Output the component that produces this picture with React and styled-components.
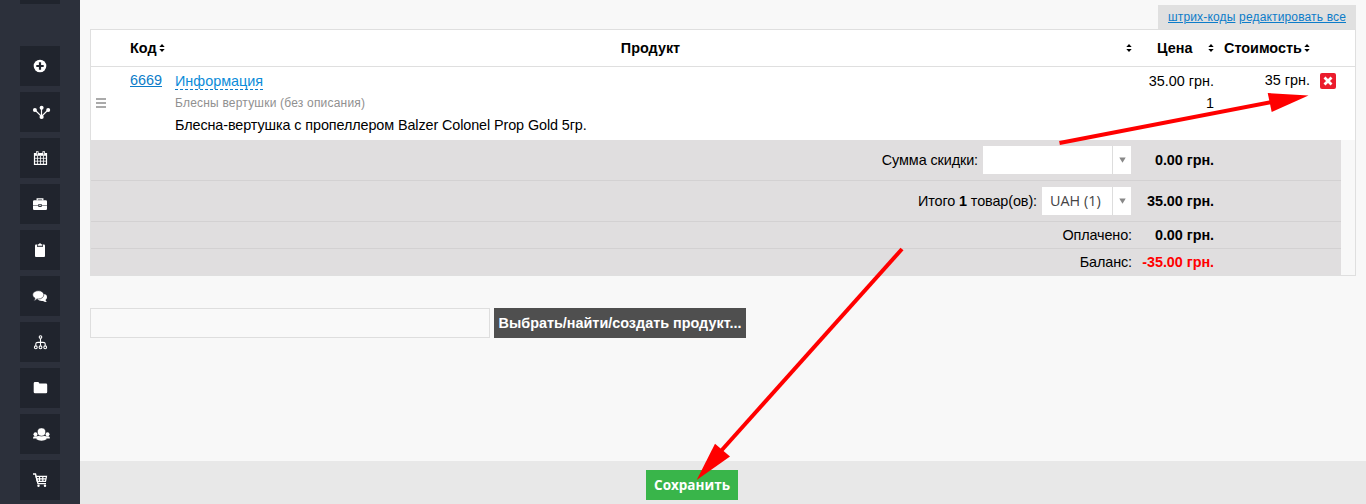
import React from "react";
import styled, { createGlobalStyle } from "styled-components";

const Global = createGlobalStyle`
  * { box-sizing: border-box; }
  body { margin: 0; background: #f8f8f8; }
`;

const Page = styled.div`
  position: relative;
  display: flex;
  width: 1366px;
  height: 504px;
  overflow: hidden;
  background: #f8f8f8;
  color: #000;
  font: 14.4px/18px "Liberation Sans", Arial, sans-serif;
  white-space: nowrap;
`;
const Sidebar = styled.nav`
  flex: none;
  width: 80px;
  height: 504px;
  padding-left: 20px;
  background: #2c303b;
  overflow: hidden;
`;
const NavStub = styled.div`
  width: 40px;
  height: 4px;
  margin-bottom: 42px;
  background: #20242d;
`;
const NavButton = styled.a`
  display: block;
  width: 40px;
  height: 40px;
  margin-bottom: 6px;
  background: #20242d;
  svg { display: block; }
`;
const Main = styled.main`
  flex: 1;
  display: flex;
  flex-direction: column;
`;
const Content = styled.div`
  flex: 1;
  display: flex;
  flex-direction: column;
  padding: 5px 10px 0;
`;
const Tools = styled.div`
  align-self: flex-end;
  display: flex;
  justify-content: space-between;
  width: 198px;
  height: 24px;
  padding: 0 10px;
  background: #e0e0e0;
  font-size: 12px;
  letter-spacing: 0.15px;
  line-height: 24px;
`;
const Link = styled.a`
  color: #0c7cc9;
  text-decoration: underline;
`;
const Table = styled.section`
  height: 247px;
  border: 1px solid #dfdfdf;
`;
const columns = "39px 45px 957px 87px 95px 41px";
const HeadRow = styled.div`
  display: grid;
  grid-template-columns: ${columns};
  align-items: center;
  height: 37px;
  border-bottom: 1px solid #dfdfdf;
  background: #fff;
  font-weight: bold;
`;
const HeadCell = styled.div`
  display: flex;
  align-items: center;
  justify-content: ${(p) => p.$justify || "flex-start"};
  padding-right: ${(p) => p.$end || 0}px;
  padding-left: ${(p) => p.$start || 0}px;
  gap: ${(p) => p.$gap || 0}px;
`;
const Row = styled.div`
  display: grid;
  grid-template-columns: ${columns};
  height: 73px;
  background: #fff;
`;
const Handle = styled.div`
  display: flex;
  flex-direction: column;
  gap: 2px;
  padding: 31px 0 0 5px;
`;
const HandleBar = styled.i`
  width: 10px;
  height: 2px;
  background: #aaa;
`;
const Cell = styled.div`
  padding-top: ${(p) => p.$top}px;
  padding-right: ${(p) => p.$end || 0}px;
  text-align: ${(p) => p.$align || "left"};
`;
const Info = styled.a`
  display: inline-block;
  height: 17px;
  line-height: 16px;
  border-bottom: 1px dashed #0c7cc9;
  color: #0c8cd9;
`;
const Line = styled.div`
  height: 22px;
  line-height: 22px;
`;
const ProductName = styled(Line)`
  letter-spacing: -0.1px;
`;
const Category = styled(Line)`
  color: #909090;
  font-size: 12px;
  letter-spacing: 0.2px;
`;
const Remove = styled.button`
  display: block;
  width: 16px;
  height: 16px;
  margin: 6px 0 0 6px;
  padding: 0;
  border: 0;
  border-radius: 2px;
  background: #eb1c2d;
  svg { display: block; }
`;
const Summary = styled.div`
  width: 1250px;
  background: #e0dedf;
`;
const SumRow = styled.div`
  display: grid;
  grid-template-columns: 1041px 82px;
  align-items: center;
  height: ${(p) => p.$h}px;
  border-top: ${(p) => (p.$first ? "0" : "1px solid #d3d1d2")};
`;
const SumLabel = styled.div`
  display: flex;
  justify-content: flex-end;
  align-items: center;
  gap: 5px;
  letter-spacing: -0.1px;
`;
const Amount = styled.b`
  text-align: right;
  letter-spacing: -0.05px;
  color: ${(p) => (p.$debt ? "#f00" : "#000")};
`;
const Select = styled.div`
  display: flex;
  align-items: center;
  justify-content: space-between;
  width: ${(p) => p.$w}px;
  height: 28px;
  margin-right: 1px;
  padding-left: 8px;
  background: #fff;
  color: #444;
  font-family: "Open Sans", sans-serif;
  letter-spacing: 0;
`;
const Caret = styled.span`
  display: flex;
  align-items: center;
  justify-content: center;
  width: 19px;
  height: 28px;
  border-left: 1px solid #ddd;
`;
const Search = styled.div`
  display: flex;
  gap: 4px;
  margin-top: 32px;
`;
const SearchInput = styled.input`
  width: 400px;
  height: 30px;
  border: 1px solid #dedede;
  background: #f9f9f9;
`;
const SearchButton = styled.button`
  width: 252px;
  height: 30px;
  padding: 0;
  border: 0;
  background: #4f4f4f;
  color: #fff;
  font: bold 14.4px/30px "Liberation Sans", Arial, sans-serif;
`;
const Footer = styled.footer`
  display: flex;
  height: 43px;
  padding: 9px 0 0 566px;
  background: #e8e8e8;
`;
const Save = styled.button`
  width: 92px;
  height: 30px;
  padding: 0;
  border: 0;
  background: #39b54a;
  color: #fff;
  font: bold 13.5px/30px "Open Sans", sans-serif;
`;
const Overlay = styled.svg`
  position: absolute;
  inset: 0;
  pointer-events: none;
`;

const Sort = () => (
  <svg width="6" height="8" viewBox="0 0 6 8">
    <path d="M.3 3L3 0L5.7 3ZM.3 5H5.7L3 8Z" fill="#000" />
  </svg>
);
const DropCaret = () => (
  <Caret>
    <svg width="7" height="6" viewBox="0 0 7 6"><path d="M.3 .5H6.7L3.5 5.7Z" fill="#888" /></svg>
  </Caret>
);

const icons = [
  <g key="add"><circle cx="20" cy="20" r="6.3" fill="#fff" /><path d="M20 16.3V23.7M16.3 20H23.7" stroke="#20242d" strokeWidth="2.2" /></g>,
  <g key="nodes" fill="#fff"><path d="M15 18L21.5 24.5L28 18M21.5 16V24" fill="none" stroke="#fff" strokeWidth="1.2" /><circle cx="14.9" cy="18.1" r="2" /><circle cx="21.6" cy="15.8" r="2" /><circle cx="28.2" cy="18.1" r="2" /><circle cx="21.6" cy="25" r="2.1" /></g>,
  <g key="calendar" fill="none" stroke="#fff"><path d="M14.5 15.5H26.5V26.4H14.5Z" strokeWidth="1.2" /><path d="M14 16.5H27" strokeWidth="2.6" /><path d="M14.5 20.3H26.5M14.5 23.2H26.5M17.5 18V26M20.5 18V26M23.5 18V26" strokeWidth=".8" /><path d="M17.3 13.2V16.7M23.7 13.2V16.7" strokeWidth="2.5" /><path d="M17.3 14V16.5M23.7 14V16.5" stroke="#20242d" strokeWidth=".8" /></g>,
  <g key="briefcase" fill="#fff"><path d="M17.2 16.5V14.8H22.8V16.5" fill="none" stroke="#fff" strokeWidth="1.3" /><path d="M14.3 16.3H25.7Q27 16.3 27 17.6V21H21.6V20H18.4V21H13V17.6Q13 16.3 14.3 16.3ZM13 21.5H18.4V23H21.6V21.5H27V25Q27 26 25.8 26H14.2Q13 26 13 25Z" /><rect x="19.3" y="20.6" width="1.4" height="1.5" /></g>,
  <g key="clipboard"><path d="M16 14.5H24Q25 14.5 25 15.5V26Q25 27 24 27H16Q15 27 15 26V15.5Q15 14.5 16 14.5Z" fill="#fff" /><path d="M17 14V16.8H23V14" fill="#20242d" /><path d="M17.7 15.8V14.2H18.7Q20 12.3 21.3 14.2H22.3V15.8Z" fill="#fff" /></g>,
  <g key="chat"><path d="M20 18.5Q27 17 27 21.2Q27 23 25.5 24Q25.8 25.2 26.8 26Q24.5 26.2 23 24.9Q19.5 25.3 17.5 23.6Z" fill="#fff" /><path d="M18.3 14.7C21.7 14.7 23.8 16.5 23.8 18.8S21.7 23 18.3 23L17 22.9Q15.5 24.4 13.7 24.4Q14.8 23.6 15 22.2C13.6 21.5 12.7 20.3 12.7 18.8C12.7 16.5 15 14.7 18.3 14.7Z" fill="#fff" stroke="#20242d" strokeWidth=".6" /></g>,
  <g key="tree" fill="none" stroke="#fff" strokeWidth="1.1"><circle cx="20.5" cy="15" r="1.3" /><circle cx="15.8" cy="25.3" r="1.4" /><circle cx="20.5" cy="25.3" r="1.4" /><circle cx="25.2" cy="25.3" r="1.4" /><path d="M20.5 16.5V23.8M15.8 23.8V21.8Q15.8 20.4 18 20.4H23Q25.2 20.4 25.2 21.8V23.8" /></g>,
  <path key="folder" d="M15 14H18Q19.3 14 19.3 15.5H26Q27.2 15.5 27.2 16.7V24Q27.2 25.2 26 25.2H15Q13.7 25.2 13.7 24V15.4Q13.7 14 15 14Z" fill="#fff" />,
  <g key="group" fill="#fff"><circle cx="15.5" cy="20.2" r="2" /><circle cx="27.5" cy="20.2" r="2" /><path d="M13 24.5V23.6Q13.5 22.2 15 22.2H28Q29.5 22.2 29.8 23.6V24.5Z" /><circle cx="21.5" cy="18" r="4.1" stroke="#20242d" strokeWidth=".5" /><path d="M16.4 25.3Q16.4 22.5 18.7 22Q21.5 23.3 24.3 22Q26.6 22.5 26.6 25.3Q24.8 26.7 21.5 26.7T16.4 25.3Z" /></g>,
  <g key="cart" fill="none" stroke="#fff"><path d="M13 14H15.5L18 23.6H26" strokeWidth="1.4" /><path d="M16 16.3H26.5L25.5 21.3H17.3ZM16.5 18.8H26M19.5 16.3V21M22.8 16.3V21" strokeWidth="1.2" /><circle cx="18.5" cy="25.8" r="1.2" fill="#fff" stroke="none" /><circle cx="25" cy="25.8" r="1.2" fill="#fff" stroke="none" /></g>,
];

export default function App() {
  return (
    <Page>
      <Global />
      <Sidebar>
        <NavStub />
        {icons.map((icon) => (
          <NavButton key={icon.key}><svg width="40" height="40">{icon}</svg></NavButton>
        ))}
      </Sidebar>
      <Main>
        <Content>
          <Tools><Link>штрих-коды</Link><Link>редактировать все</Link></Tools>
          <Table>
            <HeadRow>
              <span />
              <HeadCell $gap={2}>Код<Sort /></HeadCell>
              <HeadCell $justify="space-between"><span /><span>Продукт</span><Sort /></HeadCell>
              <HeadCell $justify="space-between" $start={25} $end={5}>Цена<Sort /></HeadCell>
              <HeadCell $gap={2} $start={5}>Стоимость<Sort /></HeadCell>
            </HeadRow>
            <Row>
              <Handle><HandleBar /><HandleBar /><HandleBar /></Handle>
              <Cell $top={4}><Link>6669</Link></Cell>
              <Cell $top={3}>
                <Line><Info>Информация</Info></Line>
                <Category>Блесны вертушки (без описания)</Category>
                <ProductName>Блесна-вертушка с пропеллером Balzer Colonel Prop Gold 5гр.</ProductName>
              </Cell>
              <Cell $top={3} $end={5} $align="right"><Line>35.00 грн.</Line><Line>1</Line></Cell>
              <Cell $top={4} $end={4} $align="right">35 грн.</Cell>
              <Remove aria-label="Удалить"><svg width="16" height="16"><path d="M4.5 4.5L11.5 11.5M11.5 4.5L4.5 11.5" stroke="#fff" strokeWidth="2.8" /></svg></Remove>
            </Row>
            <Summary>
              <SumRow $h={40} $first><SumLabel><span>Сумма скидки:</span><Select $w={148}><span /><DropCaret /></Select></SumLabel><Amount>0.00 грн.</Amount></SumRow>
              <SumRow $h={41}><SumLabel><span>Итого <b>1</b> товар(ов):</span><Select $w={89}>UAH (1)<DropCaret /></Select></SumLabel><Amount>35.00 грн.</Amount></SumRow>
              <SumRow $h={27}><SumLabel>Оплачено:</SumLabel><Amount>0.00 грн.</Amount></SumRow>
              <SumRow $h={27}><SumLabel>Баланс:</SumLabel><Amount $debt>-35.00 грн.</Amount></SumRow>
            </Summary>
          </Table>
          <Search><SearchInput /><SearchButton>Выбрать/найти/создать продукт...</SearchButton></Search>
        </Content>
        <Footer><Save>Сохранить</Save></Footer>
      </Main>
      <Overlay width="1366" height="504">
        <g fill="#f00" stroke="#f00">
          <path d="M1059.5 143L1272 102" strokeWidth="4" />
          <path d="M1308.5 95.5L1267.7 93L1271.7 112Z" stroke="none" />
          <path d="M902 249L721 451" strokeWidth="4" />
          <path d="M696.7 480L715 443.7L730 456.5Z" stroke="none" />
        </g>
      </Overlay>
    </Page>
  );
}
